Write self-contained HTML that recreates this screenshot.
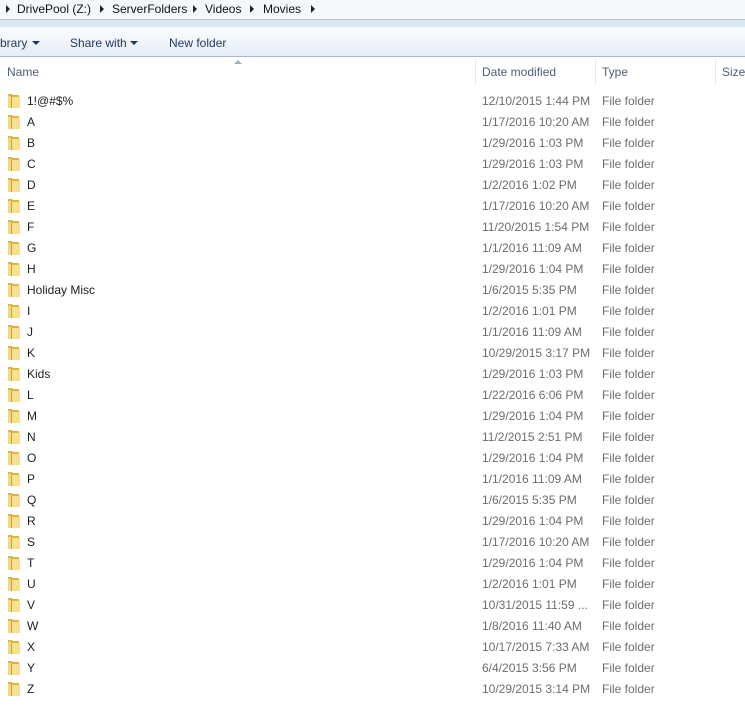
<!DOCTYPE html>
<html><head><style>
*{margin:0;padding:0;box-sizing:border-box}
body{width:745px;height:713px;overflow:hidden;background:#fff;font-family:"Liberation Sans",sans-serif;font-size:12px;color:#1e1e1e;position:relative}
.bc{position:absolute;left:0;top:0;width:745px;height:19px;background:#f4f7fc;}
.bc span{position:absolute;top:2px;font-size:12px;color:#111}
.tri{position:absolute;top:5px;width:0;height:0;border-top:4px solid transparent;border-bottom:4px solid transparent;border-left:4px solid #222}
.l1{position:absolute;top:19px;left:0;width:745px;height:1px;background:#b9c9da}
.band{position:absolute;top:20px;left:0;width:745px;height:7px;background:#dbe6f4}
.tb{position:absolute;top:27px;left:0;width:745px;height:30px;background:linear-gradient(#fbfcfe,#f1f5fb 50%,#e4ecf7);border-bottom:1px solid #a7b6c9}
.tb span{position:absolute;top:9px;font-size:12px;color:#1e395b}
.dd{position:absolute;top:14px;width:0;height:0;border-left:4px solid transparent;border-right:4px solid transparent;border-top:4px solid #1e395b}
.hd span{position:absolute;top:65px;color:#4c607a;font-size:12px}
.sep{position:absolute;top:58px;width:1px;height:28px;background:#e6ebf0}
.row{position:absolute;left:0;height:21px;width:745px}
.row .n{position:absolute;left:27px;top:3px}
.row .d{position:absolute;left:482px;top:3px;color:#6d6d6d}
.row .t{position:absolute;left:602px;top:3px;color:#6d6d6d}
.f{position:absolute;left:7px;top:2px;width:14px;height:16px}
</style></head><body>
<div class="bc">
<div class="tri" style="left:6px"></div><span style="left:17px">DrivePool (Z:)</span>
<div class="tri" style="left:100px"></div><span style="left:112px">ServerFolders</span>
<div class="tri" style="left:193px"></div><span style="left:205px">Videos</span>
<div class="tri" style="left:250px"></div><span style="left:263px">Movies</span>
<div class="tri" style="left:311px"></div>
</div>
<div class="l1"></div><div class="band"></div>
<div class="tb">
<span style="left:0">brary</span><div class="dd" style="left:32px"></div>
<span style="left:70px">Share with</span><div class="dd" style="left:130px"></div>
<span style="left:169px">New folder</span>
</div>
<div class="hd">
<div style="position:absolute;left:234px;top:60px;border-left:4px solid transparent;border-right:4px solid transparent;border-bottom:4px solid #9db0c6"></div>
<span style="left:7px">Name</span>
<div class="sep" style="left:475px"></div><span style="left:482px">Date modified</span>
<div class="sep" style="left:595px"></div><span style="left:602px">Type</span>
<div class="sep" style="left:715px"></div><span style="left:722px">Size</span>
</div>
<div id="rows"></div>
<script>
var d=[["1!@#$%","12/10/2015 1:44 PM"],["A","1/17/2016 10:20 AM"],["B","1/29/2016 1:03 PM"],["C","1/29/2016 1:03 PM"],["D","1/2/2016 1:02 PM"],["E","1/17/2016 10:20 AM"],["F","11/20/2015 1:54 PM"],["G","1/1/2016 11:09 AM"],["H","1/29/2016 1:04 PM"],["Holiday Misc","1/6/2015 5:35 PM"],["I","1/2/2016 1:01 PM"],["J","1/1/2016 11:09 AM"],["K","10/29/2015 3:17 PM"],["Kids","1/29/2016 1:03 PM"],["L","1/22/2016 6:06 PM"],["M","1/29/2016 1:04 PM"],["N","11/2/2015 2:51 PM"],["O","1/29/2016 1:04 PM"],["P","1/1/2016 11:09 AM"],["Q","1/6/2015 5:35 PM"],["R","1/29/2016 1:04 PM"],["S","1/17/2016 10:20 AM"],["T","1/29/2016 1:04 PM"],["U","1/2/2016 1:01 PM"],["V","10/31/2015 11:59 ..."],["W","1/8/2016 11:40 AM"],["X","10/17/2015 7:33 AM"],["Y","6/4/2015 3:56 PM"],["Z","10/29/2015 3:14 PM"]];
var ic='<svg class="f" viewBox="0 0 14 16"><path d="M1 1h4l1 1h6v13H1z" fill="#d9b44a"/><path d="M1 3h3v12H1z" fill="#f3d97a"/><path d="M4 4h9v11H4z" fill="#f7e08e"/><path d="M4.5 4v11" stroke="#c9a23a" stroke-width="1"/></svg>';
var h='';d.forEach(function(r,i){h+='<div class="row" style="top:'+(91+i*21)+'px">'+ic+'<span class="n">'+r[0].replace(/&/g,'&amp;')+'</span><span class="d">'+r[1]+'</span><span class="t">File folder</span></div>';});
document.getElementById('rows').innerHTML=h;
</script>
</body></html>
